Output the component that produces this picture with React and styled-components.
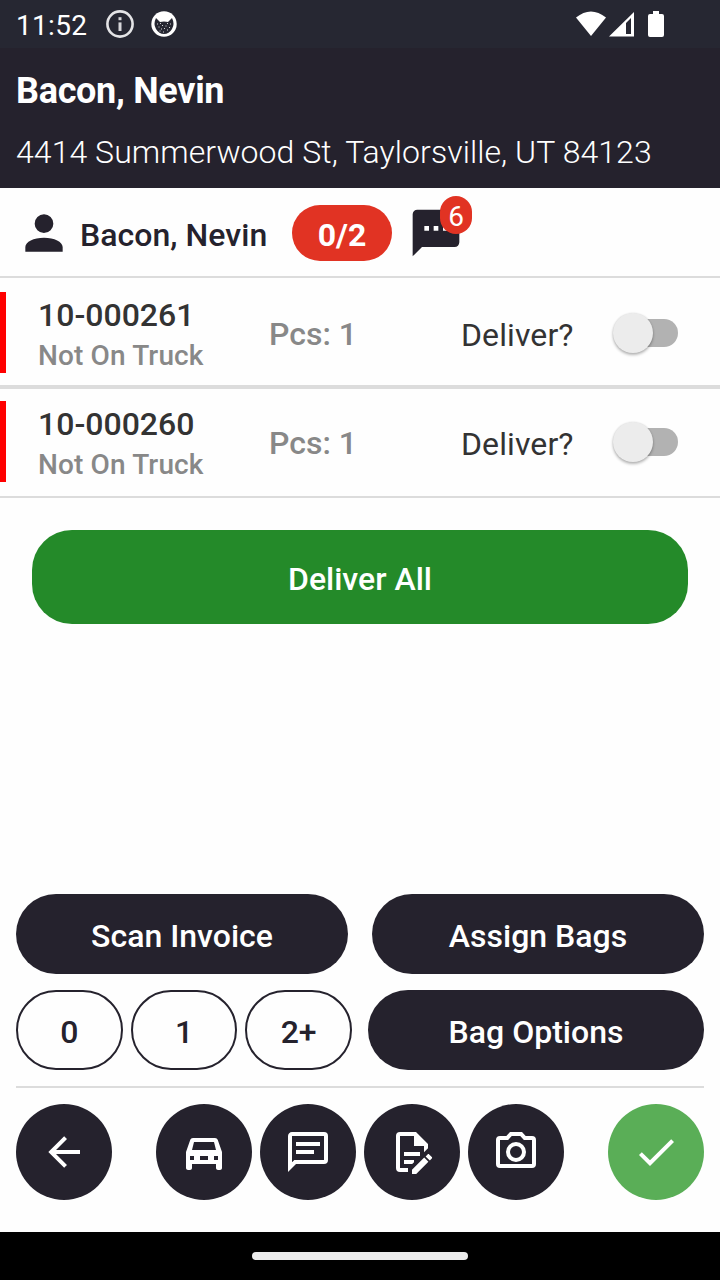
import React, { useState } from "react";
import styled, { createGlobalStyle } from "styled-components";

const INK = "#25222d";
const RED = "#e13323";
const LINE = "#dcdcdc";

const GlobalStyle = createGlobalStyle`
  * { box-sizing: border-box; }
  body { margin: 0; background: #fff; font-family: Roboto, sans-serif; }
  button { font-family: inherit; margin: 0; padding: 0; border: 0; cursor: pointer; }
`;

const Screen = styled.div`
  width: 720px;
  height: 1280px;
  display: flex;
  flex-direction: column;
  background: #fefefe;
  overflow: hidden;
`;

const StatusBar = styled.div`
  height: 48px;
  flex: none;
  display: flex;
  align-items: center;
  padding: 0 55px 0 16px;
  background: #262732;
  color: #fff;
`;

const Clock = styled.span`
  font-size: 28px;
  line-height: 32px;
  letter-spacing: 0.3px;
  width: 90px;
  padding-top: 3px;
  white-space: nowrap;
`;

const StatusIcons = styled.div`
  display: flex;
  gap: ${(p) => p.$gap}px;
  margin-left: ${(p) => (p.$end ? "auto" : 0)};
`;

const Header = styled.header`
  height: 140px;
  flex: none;
  padding: 22px 16px 0;
  background: ${INK};
  color: #fff;
`;

const Title = styled.h1`
  margin: 0;
  font-size: 36px;
  line-height: 42px;
  font-weight: 700;
  letter-spacing: -0.3px;
`;

const Address = styled.p`
  margin: 20px 0 0;
  font-size: 32px;
  line-height: 40px;
  font-weight: 300;
  letter-spacing: 0.065px;
  white-space: nowrap;
`;

const CustomerRow = styled.div`
  height: 88px;
  flex: none;
  display: flex;
  align-items: center;
  padding: 2px 16px 0;
  color: ${INK};
`;

const CustomerName = styled.span`
  width: 220px;
  padding: 3px 0 0 8px;
  font-size: 32px;
  font-weight: 500;
  letter-spacing: 0.05px;
  white-space: nowrap;
`;

const CountPill = styled.span`
  width: 100px;
  height: 56px;
  padding-top: 3px;
  margin-right: 16px;
  border-radius: 28px;
  display: flex;
  align-items: center;
  justify-content: center;
  background: ${RED};
  color: #fff;
  font-size: 32px;
  font-weight: 700;
`;

const MessageButton = styled.span`
  position: relative;
  display: flex;
`;

const Badge = styled.span`
  position: absolute;
  top: -9px;
  right: -8px;
  width: 32px;
  height: 38px;
  padding-top: 3px;
  border-radius: 16px;
  display: flex;
  align-items: center;
  justify-content: center;
  background: ${RED};
  color: #fff;
  font-size: 28px;
`;

const InvoiceList = styled.div`
  flex: none;
  border: solid ${LINE};
  border-width: 2px 0;
`;

const Item = styled.div`
  height: 109px;
  display: flex;
  align-items: center;
  padding-right: 40px;
  border: solid transparent;
  border-width: 2px 0;

  &:not(:last-child) { border-bottom-color: ${LINE}; }
  &:not(:first-child) { border-top-color: ${LINE}; }
`;

const Marker = styled.span`
  width: 6px;
  height: 81px;
  background: #f00;
`;

const Invoice = styled.div`
  width: 231px;
  padding-left: 32px;
`;

const InvoiceNumber = styled.div`
  color: #333;
  font-size: 32px;
  line-height: 40px;
  font-weight: 500;
  padding-top: 4px;
`;

const InvoiceStatus = styled.div`
  color: #888;
  font-size: 28px;
  line-height: 38px;
  font-weight: 500;
  letter-spacing: 0.13px;
  padding-top: 2px;
`;

const Pieces = styled.span`
  width: 224px;
  padding: 2px 0 0 32px;
  color: #888;
  font-size: 32px;
  font-weight: 500;
`;

const DeliverLabel = styled.span`
  padding-top: 4px;
  color: #333;
  font-size: 32px;
  letter-spacing: 0.1px;
`;

const Track = styled.button`
  width: 62px;
  height: 28px;
  margin: 1px 2px 0 auto;
  border-radius: 14px;
  display: flex;
  align-items: center;
  justify-content: ${(p) => (p.$on ? "flex-end" : "flex-start")};
  background: ${(p) => (p.$on ? "#9bd09a" : "#b2b2b2")};
`;

const Thumb = styled.span`
  flex: none;
  width: 40px;
  height: 40px;
  margin: 0 -3px;
  border-radius: 50%;
  background: #ececec;
  box-shadow: 0 2px 3px rgba(0, 0, 0, 0.28), 0 0 2px rgba(0, 0, 0, 0.12);
`;

const Content = styled.main`
  flex: 1;
  padding: 32px;
`;

const Button = styled.button`
  width: ${(p) => p.$width || "100%"};
  height: ${(p) => p.$height || 80}px;
  padding-top: 4px;
  border-radius: 40px;
  border: ${(p) => (p.$outline ? `2px solid ${INK}` : "0")};
  background: ${(p) => (p.$outline ? "#fefefe" : p.$color || INK)};
  color: ${(p) => (p.$outline ? INK : "#fff")};
  font-size: 32px;
  font-weight: 500;
`;

const Footer = styled.footer`
  flex: none;
  padding: 0 16px 32px;
`;

const ButtonRow = styled.div`
  display: flex;
  gap: ${(p) => p.$gap}px;
  margin-bottom: 16px;
`;

const BagCounts = styled.div`
  width: 336px;
  display: grid;
  grid-template-columns: repeat(3, 1fr);
  gap: 8px;
`;

const ActionBar = styled.div`
  display: flex;
  justify-content: space-between;
  padding-top: 16px;
  border-top: 2px solid ${LINE};
`;

const ActionGroup = styled.div`
  display: flex;
  gap: 8px;
`;

const RoundButton = styled.button`
  width: 96px;
  height: 96px;
  border-radius: 50%;
  display: flex;
  align-items: center;
  justify-content: center;
  background: ${(p) => p.$color || INK};
  color: #fff;
`;

const SystemNav = styled.div`
  height: 48px;
  flex: none;
  display: flex;
  align-items: center;
  justify-content: center;
  background: #000;
`;

const HomeHandle = styled.span`
  width: 216px;
  height: 8px;
  border-radius: 4px;
  background: #ececec;
`;

const PATHS = {
  account:
    "M12,4A4,4 0 0,1 16,8A4,4 0 0,1 12,12A4,4 0 0,1 8,8A4,4 0 0,1 12,4M12,14C16.42,14 20,15.79 20,18V20H4V18C4,15.79 7.58,14 12,14Z",
  message:
    "M17,11H15V9H17M13,11H11V9H13M9,11H7V9H9M20,2H4A2,2 0 0,0 2,4V22L6,18H20A2,2 0 0,0 22,16V4C22,2.89 21.1,2 20,2Z",
  back: "M20,11V13H8L13.5,18.5L12.08,19.92L4.16,12L12.08,4.08L13.5,5.5L8,11H20Z",
  car: "M18.9,6C18.7,5.4 18.1,5 17.5,5H6.5C5.8,5 5.3,5.4 5.1,6L3,12V20C3,20.5 3.5,21 4,21H5C5.5,21 6,20.5 6,20V18H18V20C18,20.5 18.5,21 19,21H20C20.5,21 21,20.5 21,20V12L18.9,6M7,7H17L18,11H6L7,7M5,14H7V16H5V14M10,14H14V16H10V14M17,14H19V16H17V14Z",
  note: "M20,2A2,2 0 0,1 22,4V16A2,2 0 0,1 20,18H6L2,22V4C2,2.89 2.9,2 4,2H20M4,4V17.17L5.17,16H20V4H4M6,7H18V9H6V7M6,11H15V13H6V11Z",
  document:
    "M8,12H16V14H8V12M10,20H6V4H13V9H18V12.1L20,10.1V8L14,2H6A2,2 0 0,0 4,4V20A2,2 0 0,0 6,22H10V20M8,18H12.1L13,17.1V16H8V18M20.2,13C20.3,13 20.5,13.1 20.6,13.2L21.9,14.5C22.1,14.7 22.1,15.1 21.9,15.3L20.9,16.3L18.8,14.2L19.8,13.2C19.9,13.1 20,13 20.2,13M20.2,16.9L14.1,23H12V20.9L18.1,14.8L20.2,16.9Z",
  camera:
    "M20,4H16.83L15,2H9L7.17,4H4A2,2 0 0,0 2,6V18A2,2 0 0,0 4,20H20A2,2 0 0,0 22,18V6A2,2 0 0,0 20,4M20,18H4V6H8.05L9.88,4H14.12L15.95,6H20V18M12,7A5,5 0 0,0 7,12A5,5 0 0,0 12,17A5,5 0 0,0 17,12A5,5 0 0,0 12,7M12,15A3,3 0 0,1 9,12A3,3 0 0,1 12,9A3,3 0 0,1 15,12A3,3 0 0,1 12,15Z",
  check: "M21,7L9,19L3.5,13.5L4.91,12.09L9,16.17L19.59,5.59L21,7Z",
};

function Icon({ name, size = 48 }) {
  return (
    <svg width={size} height={size} viewBox="0 0 24 24" fill="currentColor" fillRule="evenodd">
      <path d={PATHS[name]} />
    </svg>
  );
}

function InfoIcon() {
  return (
    <svg width="28" height="28" viewBox="0 0 28 28" fill="#d6d6d9">
      <circle cx="14" cy="14" r="12.6" fill="none" stroke="#e4e4e6" strokeWidth="2.6" />
      <rect x="12.5" y="12.4" width="3" height="8.6" />
      <rect x="12.5" y="7.2" width="3" height="3" />
    </svg>
  );
}

function CatIcon() {
  return (
    <svg width="28" height="28" viewBox="0 0 28 28">
      <circle cx="14" cy="14" r="12.7" fill="#fff" />
      <path
        d="M6 8L10 12Q14 11 18 12L22 8Q25 14 22 19Q19 24 14 24Q9 24 6 19Q3 14 6 8Z"
        fill="#262732"
      />
      <path
        d="M7 14h1M10 13.500h1M17 13.500h1M20 14h1M8.500 17h1M12 15.500h1M15.500 16h1M19 17.500h1M11 19h1M14 18.500h1M17 20h1M13 22h1M9.500 21h1"
        stroke="#fff"
        strokeWidth="0.8"
      />
    </svg>
  );
}

function DeviceIcons() {
  return (
    <svg width="90" height="28" viewBox="0 0 90 28" fill="#fff">
      <path d="M1 7.6Q15.900 -4.600 31 7.600L16 26Z" />
      <path fillRule="evenodd" d="M34 26.500L59 2V26.500ZM51 13V24H56V8Z" />
      <path d="M74 4H78V1H84V4H87Q89 4 89 6V25Q89 27 87 27H75Q73 27 73 25V6Q73 4 75 4Z" />
    </svg>
  );
}

function InvoiceRow({ number }) {
  const [on, setOn] = useState(false);
  return (
    <Item>
      <Marker />
      <Invoice>
        <InvoiceNumber>{number}</InvoiceNumber>
        <InvoiceStatus>Not On Truck</InvoiceStatus>
      </Invoice>
      <Pieces>Pcs: 1</Pieces>
      <DeliverLabel>Deliver?</DeliverLabel>
      <Track $on={on} onClick={() => setOn(!on)}>
        <Thumb />
      </Track>
    </Item>
  );
}

export default function App() {
  return (
    <Screen>
      <GlobalStyle />
      <StatusBar>
        <Clock>11:52</Clock>
        <StatusIcons $gap={16}>
          <InfoIcon />
          <CatIcon />
        </StatusIcons>
        <StatusIcons $end>
          <DeviceIcons />
        </StatusIcons>
      </StatusBar>
      <Header>
        <Title>Bacon, Nevin</Title>
        <Address>4414 Summerwood St, Taylorsville, UT 84123</Address>
      </Header>
      <CustomerRow>
        <Icon name="account" size={56} />
        <CustomerName>Bacon, Nevin</CustomerName>
        <CountPill>0/2</CountPill>
        <MessageButton>
          <Icon name="message" size={56} />
          <Badge>6</Badge>
        </MessageButton>
      </CustomerRow>
      <InvoiceList>
        <InvoiceRow number="10-000261" />
        <InvoiceRow number="10-000260" />
      </InvoiceList>
      <Content>
        <Button $height={94} $color="#248a29">Deliver All</Button>
      </Content>
      <Footer>
        <ButtonRow $gap={24}>
          <Button>Scan Invoice</Button>
          <Button>Assign Bags</Button>
        </ButtonRow>
        <ButtonRow $gap={16}>
          <BagCounts>
            <Button $outline>0</Button>
            <Button $outline>1</Button>
            <Button $outline>2+</Button>
          </BagCounts>
          <Button $width="336px">Bag Options</Button>
        </ButtonRow>
        <ActionBar>
          <RoundButton><Icon name="back" /></RoundButton>
          <ActionGroup>
            <RoundButton><Icon name="car" /></RoundButton>
            <RoundButton><Icon name="note" /></RoundButton>
            <RoundButton><Icon name="document" /></RoundButton>
            <RoundButton><Icon name="camera" /></RoundButton>
          </ActionGroup>
          <RoundButton $color="#5aae57"><Icon name="check" /></RoundButton>
        </ActionBar>
      </Footer>
      <SystemNav>
        <HomeHandle />
      </SystemNav>
    </Screen>
  );
}
